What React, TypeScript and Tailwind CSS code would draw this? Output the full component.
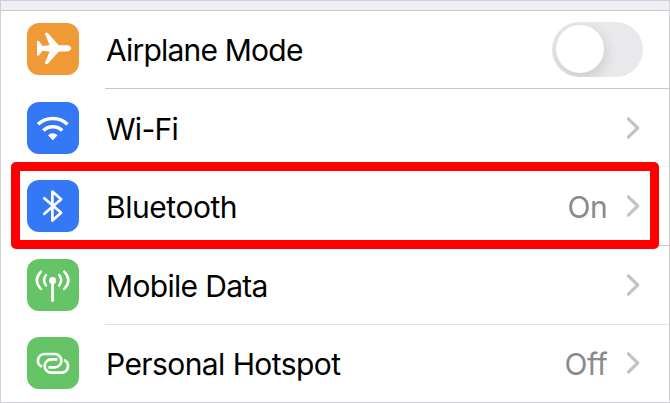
import type { ReactNode } from "react";

type Row = {
  label: string;
  labelClass: string;
  rowClass: string;
  lineClass: string;
  tileClass: string;
  icon: ReactNode;
  value?: string;
  toggle?: boolean;
};

const stroke = {
  fill: "none",
  stroke: "white",
  strokeLinecap: "round",
  strokeLinejoin: "round",
} as const;

const rows: Row[] = [
  {
    label: "Airplane Mode",
    labelClass: "tracking-[-0.8px]",
    rowClass: "h-[78px] pt-3",
    lineClass: "border-[#c8c7cc]",
    tileClass: "bg-[#f09a37]",
    toggle: true,
    icon: (
      <path
        fill="white"
        d="M17.9 10.8Q17.6 9.8 18.6 9.8H20Q20.8 9.8 21.3 10.4L31.3 21.7Q31.8 22.3 32.6 22.3H40C42.6 22.3 44.2 23.8 44.2 25.3S42.6 28.4 40 28.4H32.6Q31.8 28.4 31.3 29L21.3 40.2Q20.8 40.9 20 40.9H18.6Q17.6 40.9 17.9 39.8L22.4 29.2Q22.7 28.4 21.9 28.4L15.4 27.8L12.4 32Q11.9 32.8 11.2 32.8H10.6Q10 32.8 10 32.1V18.4Q10 17.8 10.6 17.8H11.2Q11.9 17.8 12.4 18.5L15.4 22.9L21.9 22.3Q22.7 22.2 22.4 21.5Z"
      />
    ),
  },
  {
    label: "Wi-Fi",
    labelClass: "tracking-[-0.7px]",
    rowClass: "h-[78px] pt-[13px]",
    lineClass: "border-[#efeff1]",
    tileClass: "bg-[#3478f6]",
    icon: (
      <>
        <path d="M11 22.3A21.8 21.8 0 0 1 40.5 22.3" fill="none" stroke="white" strokeWidth="3.5" />
        <path d="M16.3 28.5A13.6 13.6 0 0 1 35.3 28.5" fill="none" stroke="white" strokeWidth="3.5" />
        <path d="M21 33.2A7 7 0 0 1 30.5 33.2L25.8 38.2Z" fill="white" />
      </>
    ),
  },
  {
    label: "Bluetooth",
    labelClass: "tracking-[-0.45px]",
    rowClass: "h-[79px] pt-[13px]",
    lineClass: "border-[#c8c7cc]",
    tileClass: "bg-[#3478f6]",
    value: "On",
    icon: <path {...stroke} strokeWidth="2.7" d="M17.3 18.3L34.1 32.8L25.4 40.5V11.6L34.1 19.2L17.3 33.8" />,
  },
  {
    label: "Mobile Data",
    labelClass: "tracking-[-0.68px]",
    rowClass: "h-[79px] pt-[13px]",
    lineClass: "border-[#e3e3e5]",
    tileClass: "bg-[#65c466]",
    icon: (
      <>
        <circle cx="25.6" cy="21.4" r="3.5" fill="white" />
        <g {...stroke} strokeWidth="2.5">
          <path d="M25.6 22V41.6" strokeWidth="2.8" />
          <path d="M19 16.1Q15 21.3 19 26.5M32.2 16.1Q36.2 21.3 32.2 26.5" />
          <path d="M14 12.6Q5.6 21.3 14 30M37.2 12.6Q45.6 21.3 37.2 30" />
        </g>
      </>
    ),
  },
  {
    label: "Personal Hotspot",
    labelClass: "tracking-[-0.58px]",
    rowClass: "h-[77px] pt-3",
    lineClass: "border-white",
    tileClass: "bg-[#65c466]",
    value: "Off",
    icon: (
      <g {...stroke} strokeLinecap="butt" strokeWidth="2.7">
        <path d="M14.9 29.7A6.65 6.65 0 0 1 18 17H27.7A6.65 6.65 0 0 1 27.7 30.3H21.5" />
        <path d="M37.1 23A6.65 6.65 0 0 1 34 35.7H24.3A6.65 6.65 0 0 1 24.3 22.4H30.5" />
      </g>
    ),
  },
];

function Toggle() {
  return (
    <span className="mr-[26px] flex h-[55px] w-[91px] items-center overflow-hidden rounded-full bg-[#e9e9eb] pl-[3.5px]">
      <span className="size-[48.5px] rounded-full bg-white shadow-[1px_5px_14px_rgba(0,0,0,0.14)]" />
    </span>
  );
}

function Chevron() {
  return (
    <svg width="14" height="24" viewBox="0 0 14 24" className="mr-[29px]" aria-hidden="true">
      <path
        d="M2.4 2.8L11.7 12L2.4 21.2"
        fill="none"
        stroke="#c4c4c6"
        strokeWidth="3.2"
        strokeLinecap="round"
        strokeLinejoin="round"
      />
    </svg>
  );
}

function SettingsRow({ row }: { row: Row }) {
  return (
    <div className={`relative flex items-start pl-[26px] ${row.rowClass}`}>
      <span className={`size-[52px] shrink-0 rounded-[12px] ${row.tileClass}`}>
        <svg width="52" height="52" viewBox="0 0 52 52" aria-hidden="true">
          {row.icon}
        </svg>
      </span>
      <div className="flex h-[52px] flex-1 items-center pl-[27px]">
        <span className={`flex-1 whitespace-nowrap pt-0.5 text-[30px] leading-[52px] text-black ${row.labelClass}`}>
          {row.label}
        </span>
        {row.value && (
          <span className="mr-[18.5px] pt-0.5 text-[30px] leading-[52px] tracking-[-0.3px] text-[#8a8a8e]">
            {row.value}
          </span>
        )}
        {row.toggle ? <Toggle /> : <Chevron />}
      </div>
      <span className={`absolute right-0 bottom-0 left-[104px] border-b ${row.lineClass}`} />
    </div>
  );
}

export default function App() {
  return (
    <main className="relative h-[403px] w-[670px] overflow-hidden border border-[#d0d0d2] bg-white font-['Inter',sans-serif]">
      <div className="h-[10px] border-b border-[#c8c7cc] bg-[#f0eff5]" />
      {rows.map((row) => (
        <SettingsRow key={row.label} row={row} />
      ))}
      {/* highlight frame over the Bluetooth row */}
      <div className="pointer-events-none absolute top-[161px] left-[9.5px] h-[87px] w-[648.5px] rounded-[5px] border-[9px] border-[#ff0000]" />
    </main>
  );
}
